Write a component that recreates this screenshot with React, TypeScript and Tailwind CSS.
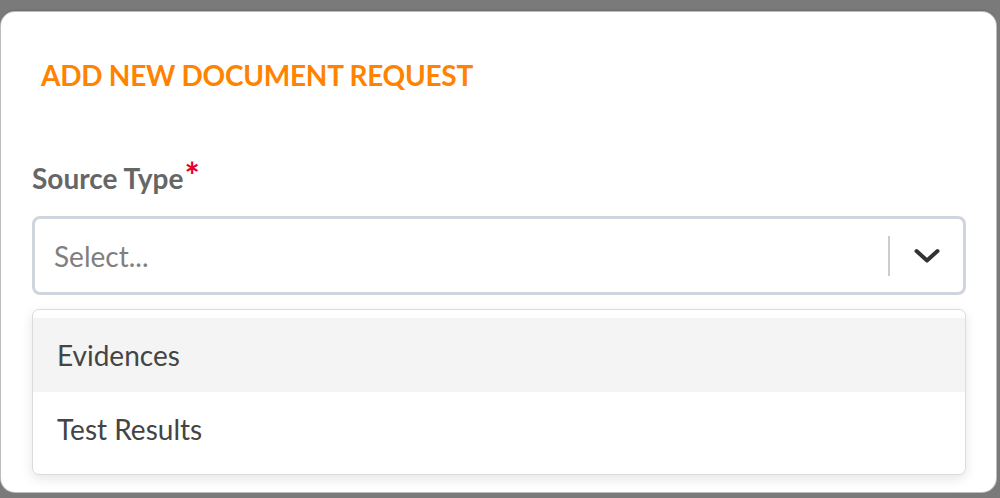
import React from 'react';

const options = ['Evidences', 'Test Results'];

export default function App() {
  return (
    <div className="w-[1000px] h-[498px] bg-[#7a7a7a] overflow-hidden pt-[12px]" style={{ fontFamily: 'Lato, "Open Sans", sans-serif' }}>
      <div className="ml-px w-[995px] h-[480px] bg-white rounded-[14px] shadow-[0_-2px_2px_rgba(0,0,0,0.12)] ring-1 ring-[#bdbdbd] flex flex-col">
        <h1 className="mt-[46px] ml-[40px] text-[28px] leading-[34px] font-bold text-[#ff8200] tracking-[-0.25px]">ADD NEW DOCUMENT REQUEST</h1>
        <div className="mt-[69px] ml-[31px] mr-[30px] flex flex-col">
          <label className="block h-[34px] text-[28px] leading-[34px] font-bold text-[#666666]">
            Source Type<span className="text-[36px] leading-none text-[#e4002b] align-top relative -top-[4px] ml-px">*</span>
          </label>
          <div className="mt-[21px] h-[79px] border-[3px] border-[#cfd5dd] rounded-[8px] flex items-center">
            <span className="flex-1 pl-[19px] text-[28px] text-[#7f7f7f]">Select...</span>
            <div className="w-[2px] h-[40px] bg-[#cccccc]" />
            <div className="w-[73px] flex justify-center">
              <svg width="26" height="16" viewBox="0 0 26 16" fill="none">
                <path d="M2.5 3 L13 12.5 L23.5 3" stroke="#333333" strokeWidth="4" strokeLinecap="round" strokeLinejoin="round" />
              </svg>
            </div>
          </div>
          <div className="mt-[14px] border border-[#dcdcdc] rounded-[7px] bg-white shadow-[0_4px_12px_rgba(0,0,0,0.1)] py-[8px]">
            {options.map((o, i) => (
              <div key={o} className={`h-[74px] flex items-center pl-[24px] text-[28px] text-[#444444] ${i === 0 ? 'bg-[#f4f4f4]' : ''}`}>
                {o}
              </div>
            ))}
          </div>
        </div>
      </div>
    </div>
  );
}
